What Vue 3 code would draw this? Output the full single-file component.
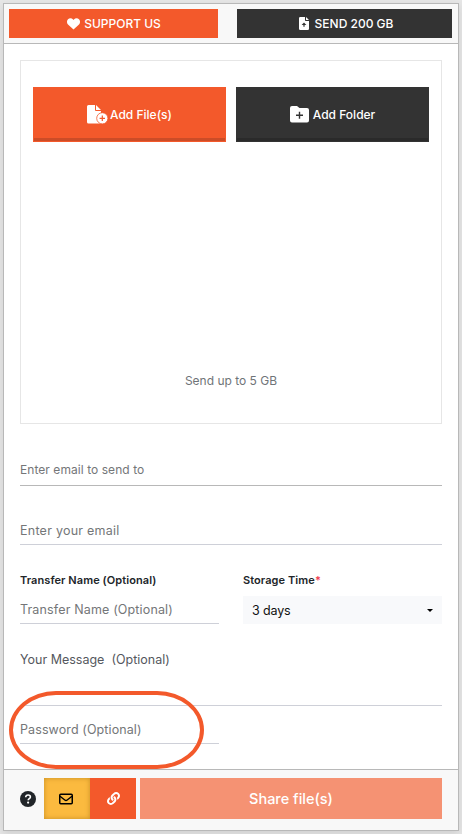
<template>
  <div class="page">
    <div class="card">
      <header class="topbar">
        <button class="top-btn support">
          <svg width="13" height="12" viewBox="0 0 13 12">
            <path fill="currentColor" d="M6.5 11.6 1 6.4C-.4 5-.3 2.600 1 1.300 2.500-.1 4.800.1 6.100 1.600l.4.4.4-.4C8.200.1 10.500-.1 12 1.300c1.300 1.300 1.400 3.700 0 5.100z" />
          </svg>
          <span class="support-text">SUPPORT US</span>
        </button>
        <button class="top-btn send">
          <svg width="10" height="13" viewBox="0 0 10 13">
            <path fill="currentColor" d="M1.300 0H6v3.200a.8.800 0 0 0 .8.800H10v7.700a1.300 1.300 0 0 1-1.300 1.300H1.300A1.300 1.300 0 0 1 0 11.700V1.300A1.300 1.300 0 0 1 1.300 0zM7 0l3 3H7z" />
            <path fill="#333" d="M5 5.500 2.600 8h1.800v1.800h1.200V8h1.800z" />
          </svg>
          <span class="send-text">SEND 200 GB</span>
        </button>
      </header>

      <main class="content">
        <section class="dropzone">
          <div class="add-row">
            <button class="add-btn files">
              <svg width="21" height="19" viewBox="0 0 21 19">
                <path fill="#fff" d="M1.5 0H8v5a1 1 0 0 0 1 1h5v12.5H1.5A1.5 1.5 0 0 1 0 17V1.5A1.5 1.5 0 0 1 1.5 0zM9 0l5 5H9z" />
                <circle cx="15.3" cy="13.3" r="5.6" fill="#fff" stroke="#f3592b" stroke-width=".8" />
                <path d="M15.3 10.6v5.4M12.6 13.3H18" stroke="#f3592b" stroke-width="1.2" />
              </svg>
              <span class="files-text">Add File(s)</span>
            </button>
            <button class="add-btn folder">
              <svg width="19" height="17" viewBox="0 0 19 17">
                <path fill="#fff" d="M2 0h5l2.5 2H17a2 2 0 0 1 2 2v10.5a2 2 0 0 1-2 2H2a2 2 0 0 1-2-2V2a2 2 0 0 1 2-2z" />
                <path d="M9.5 5.7v7M6 9.2h7" stroke="#333" stroke-width="1.4" />
              </svg>
              <span class="folder-text">Add Folder</span>
            </button>
          </div>
          <p class="limit">Send up to 5 GB</p>
        </section>

        <div class="field send-to"><span>Enter email to send to</span></div>
        <div class="field your-email"><span>Enter your email</span></div>

        <div class="columns">
          <div class="column">
            <label class="name-label">Transfer Name (Optional)</label>
            <div class="field transfer"><span>Transfer Name (Optional)</span></div>
          </div>
          <div class="column">
            <label>Storage Time<i>*</i></label>
            <div class="select">
              <span>3 days</span>
              <b class="caret"></b>
            </div>
          </div>
        </div>

        <div class="field message"><span>Your Message&nbsp; (Optional)</span></div>
        <div class="field password"><span>Password (Optional)</span></div>
      </main>

      <footer class="bottombar">
        <svg class="help" width="16" height="16" viewBox="0 0 16 16">
          <circle cx="8" cy="8" r="8" fill="#212529" />
          <path d="M5.7 6.2c.1-1.5 1-2.2 2.4-2.2 1.3 0 2.3.8 2.3 2 0 1.7-2.2 1.6-2.2 3.2" fill="none" stroke="#fff" stroke-width="1.6" />
          <circle cx="8.1" cy="11.6" r="1.1" fill="#fff" />
        </svg>
        <div class="modes">
          <button class="mode mail">
            <svg width="14" height="12" viewBox="0 0 14 12">
              <rect x=".75" y="1.25" width="12.5" height="9.5" rx="1" fill="none" stroke="#000" stroke-width="1.5" />
              <path d="M1 3.3 5.8 7q1.2.9 2.4 0L13 3.3" fill="none" stroke="#000" stroke-width="1.4" />
            </svg>
          </button>
          <button class="mode link">
            <svg width="13" height="13" viewBox="0 0 512 512">
              <path fill="#fff" d="M326.612 185.391c59.747 59.809 58.927 155.698.36 214.59-.11.12-.24.25-.36.37l-67.2 67.2c-59.27 59.27-155.699 59.262-214.96 0-59.27-59.26-59.27-155.7 0-214.96l37.106-37.106c9.84-9.84 26.786-3.3 27.294 10.606.648 17.722 3.826 35.527 9.69 52.721 1.986 5.822.567 12.262-3.783 16.612l-13.087 13.087c-28.026 28.026-28.905 73.66-1.155 101.96 28.024 28.579 74.086 28.749 102.325.51l67.2-67.19c28.191-28.191 28.073-73.757 0-101.83-3.701-3.694-7.429-6.564-10.341-8.569a16.037 16.037 0 0 1-6.947-12.606c-.396-10.567 3.348-21.456 11.698-29.806l21.054-21.055c5.521-5.521 14.182-6.199 20.584-1.731a152.482 152.482 0 0 1 20.522 17.197zM467.547 44.449c-59.261-59.262-155.69-59.27-214.96 0l-67.2 67.2c-.12.12-.25.25-.36.37-58.566 58.892-59.387 154.781.36 214.59a152.454 152.454 0 0 0 20.521 17.196c6.402 4.468 15.064 3.789 20.584-1.731l21.054-21.055c8.35-8.35 12.094-19.239 11.698-29.806a16.037 16.037 0 0 0-6.947-12.606c-2.912-2.005-6.64-4.875-10.341-8.569-28.073-28.073-28.191-73.639 0-101.83l67.2-67.19c28.239-28.239 74.3-28.069 102.325.51 27.75 28.3 26.872 73.934-1.155 101.96l-13.087 13.087c-4.35 4.35-5.769 10.79-3.783 16.612 5.864 17.194 9.042 34.999 9.69 52.721.509 13.906 17.454 20.446 27.294 10.606l37.106-37.106c59.271-59.259 59.271-155.699.001-214.959z" />
            </svg>
          </button>
        </div>
        <button class="share">Share file(s)</button>
      </footer>

      <div class="highlight"></div>
    </div>
  </div>
</template>

<script setup>
</script>

<style>
body {
  background: #e6e6e6;
}
</style>

<style scoped>
* {
  box-sizing: border-box;
}

.page {
  height: 834px;
  padding: 3px;
  overflow: hidden;
  font-family: Inter, "Liberation Sans", sans-serif;
}

.card {
  position: relative;
  display: flex;
  flex-direction: column;
  width: 456px;
  height: 828px;
  background: #fff;
  border: 1px solid #b8b8b8;
  box-shadow: 0 3px 8px rgba(0, 0, 0, 0.1);
}

button {
  display: flex;
  align-items: center;
  justify-content: center;
  padding: 0;
  border: 0;
  color: #fff;
  font-family: inherit;
  font-weight: 500;
  white-space: nowrap;
}

.topbar {
  display: flex;
  justify-content: space-between;
  height: 40px;
  padding: 5px 6px 0 5px;
  background: #f8f8f8;
  border-bottom: 1px solid #b8b8b8;
}

.top-btn {
  height: 29px;
  font-size: 12px;
}

.support {
  width: 209px;
  padding-left: 1px;
  gap: 4px;
  background: #f3592b;
}

.send {
  width: 215px;
  padding-left: 3px;
  gap: 6px;
  background: #333;
}

.content {
  height: 725px;
  padding: 16px 16px 0;
}

.dropzone {
  height: 364px;
  padding: 26px 12px 0;
  border: 1px solid #e6e6e6;
}

.add-row {
  display: flex;
  gap: 10px;
}

.add-btn {
  width: 193px;
  height: 55px;
  font-size: 12px;
}

.files {
  gap: 2px;
  background: #f3592b;
  box-shadow: inset 0 -1px #f3592b, inset 1px 0 #f3592b, inset -1px 0 #f3592b, inset 0 -4px #cc4c27;
}

.folder {
  gap: 4px;
  background: #333;
  box-shadow: inset 0 -1px #333, inset 1px 0 #333, inset -1px 0 #333, inset 0 -4px #2a2a2a;
}

.limit {
  margin: 229px 0 0;
  color: #6f7478;
  font-size: 12px;
  line-height: 20px;
  text-align: center;
}

.field {
  display: flex;
  align-items: flex-start;
  border-bottom: 1px solid #ced0d8;
  color: #747678;
  font-size: 12.5px;
  line-height: 20px;
  white-space: nowrap;
}

.send-to {
  height: 62px;
  padding-top: 36px;
  border-color: #b8b8b8;
  font-size: 12px;
  letter-spacing: 0.06px;
}

.your-email {
  height: 59px;
  padding-top: 35px;
  letter-spacing: 0.25px;
}

.columns {
  display: flex;
  gap: 24px;
  height: 79px;
  padding-top: 25px;
}

.column {
  width: 199px;
}

label {
  display: block;
  height: 20px;
  color: #212529;
  font-size: 11px;
  font-weight: 600;
  line-height: 20px;
  letter-spacing: 0.08px;
}

label i {
  color: #f04050;
  font-style: normal;
}

.transfer {
  height: 34px;
  padding-top: 10px;
  letter-spacing: 0.15px;
}

.select {
  display: flex;
  align-items: center;
  justify-content: space-between;
  height: 28px;
  margin-top: 6px;
  padding: 0 9px;
  background: #f8f9fb;
  color: #111;
  font-size: 12.5px;
  letter-spacing: -0.15px;
}

.caret {
  border: 3px solid transparent;
  border-top-color: #000;
  border-bottom: 0;
}

.message {
  height: 82px;
  padding-top: 26px;
  color: #55585e;
}

.password {
  width: 199px;
  height: 38px;
  padding-top: 14px;
  letter-spacing: 0.1px;
}

.bottombar {
  display: flex;
  align-items: flex-start;
  height: 61px;
  padding: 8px 16px 0;
  background: #f8f8f8;
  border-top: 1px solid #b8b8b8;
}

.help {
  margin: 13px 8px 0 0;
}

.modes {
  display: flex;
  margin-right: 4px;
}

.mode {
  width: 46px;
  height: 41px;
}

.mail {
  padding-right: 2px;
  background: #fbba3f;
  box-shadow: inset 0 0 5px rgba(140, 90, 0, 0.45);
}

.link {
  background: #f3592b;
}

.share {
  width: 302px;
  height: 41px;
  background: #f59273;
  font-size: 14.5px;
}

/* ring drawn over the password field */
.highlight {
  position: absolute;
  top: 687px;
  left: 5px;
  width: 195px;
  height: 78px;
  border: 4px solid #f3592b;
  border-radius: 47px / 39px;
}
</style>
